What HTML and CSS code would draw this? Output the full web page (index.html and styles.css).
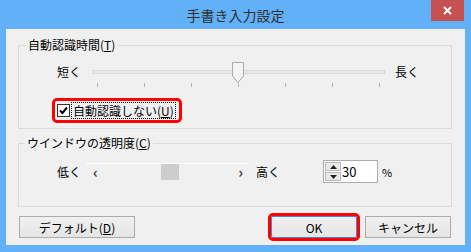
FILE: index.html
```html
<!DOCTYPE html>
<html lang="ja">
<head>
  <meta charset="UTF-8" />
  <title>手書き入力設定</title>
  <link rel="stylesheet" href="styles.css">
</head>
<body>
  <div class="window">
    <div class="titlebar">
      <div class="title">手書き入力設定</div>
      <div class="close">
        <svg width="9" height="9" viewBox="0 0 9 9"><path d="M1 1 L8 8 M8 1 L1 8" stroke="#fff" stroke-width="2"/></svg>
      </div>
    </div>

    <div class="client">
      <fieldset class="group group-time">
        <legend>自動認識時間(<u>T</u>)</legend>
        <div class="slider-row">
          <span class="side-label">短く</span>
          <div class="track">
            <svg class="thumb" width="12" height="21" viewBox="0 0 12 21">
              <path d="M0.5 0.5 H11.5 V14 L6 20.5 L0.5 14 Z" fill="#f4f4f4" stroke="#a9a9a9"/>
            </svg>
          </div>
          <span class="side-label right">長く</span>
        </div>
        <div class="ticks">
          <i></i><i></i><i></i><i></i><i></i><i></i><i></i>
        </div>
        <label class="check marked">
          <span class="box">
            <svg width="11" height="11" viewBox="0 0 11 11"><path d="M2 5.5 L4.5 8 L9 2.5" fill="none" stroke="#000" stroke-width="2"/></svg>
          </span>
          <span class="focus">自動認識しない(<u>U</u>)</span>
        </label>
      </fieldset>

      <fieldset class="group group-alpha">
        <legend>ウインドウの透明度(<u>C</u>)</legend>
        <div class="alpha-row">
          <span class="low-label">低く</span>
          <div class="scroll">
            <span class="arrow">&lsaquo;</span>
            <span class="scroll-thumb"></span>
            <span class="arrow">&rsaquo;</span>
          </div>
          <span class="high-label">高く</span>
          <div class="spin">
            <div class="spin-btns">
              <span class="spin-btn"><svg width="7" height="4" viewBox="0 0 7 4"><path d="M0 4 L3.5 0 L7 4 Z" fill="#222"/></svg></span>
              <span class="spin-btn"><svg width="7" height="4" viewBox="0 0 7 4"><path d="M0 0 L3.5 4 L7 0 Z" fill="#222"/></svg></span>
            </div>
            <span class="spin-value">30</span>
          </div>
          <span class="percent">%</span>
        </div>
      </fieldset>

      <div class="buttons">
        <button class="btn btn-default">デフォルト(<u>D</u>)</button>
        <button class="btn btn-ok marked">OK</button>
        <button class="btn btn-cancel">キャンセル</button>
      </div>
    </div>
  </div>
</body>
</html>
```

FILE: styles.css
```css
body {
  margin: 0;
  background: #62b0f7;
  font-family: "Noto Sans CJK JP", "Noto Sans", sans-serif;
  font-size: 12px;
  color: #000;
}
u {
  text-decoration: underline;
  text-underline-offset: 1px;
}
.window {
  width: 471px;
  height: 252px;
  display: flex;
  flex-direction: column;
}
.titlebar {
  height: 29px;
  display: flex;
  align-items: flex-start;
  padding-left: 40px;
}
.title {
  flex: 1;
  text-align: center;
  font-size: 14px;
  line-height: 30px;
  color: #2e2e2e;
}
.close {
  width: 33px;
  height: 21px;
  margin-right: 7px;
  background: #c75050;
  display: flex;
  align-items: center;
  justify-content: center;
}
.client {
  flex: 1;
  margin: 0 6px 7px 6px;
  background: #f0f0f0;
  padding: 9px 13px 7px 12px;
}
.group {
  margin: 0;
  padding: 0;
  width: 434px;
  box-sizing: border-box;
  border: 1px solid #dcdcdc;
  min-width: 0;
}
.group legend {
  padding: 0 2px;
  margin-left: 7px;
  line-height: 14px;
  height: 14px;
}
.group-alpha {
  margin-top: 7px;
}
.group-alpha legend {
  margin-left: 6px;
}

/* time slider */
.slider-row {
  display: flex;
  align-items: center;
  height: 20px;
  margin-top: 10px;
  padding-left: 38px;
}
.side-label {
  width: 35px;
  line-height: 14px;
}
.side-label.right {
  width: auto;
  margin-left: 10px;
}
.track {
  position: relative;
  width: 293px;
  height: 4px;
  box-sizing: border-box;
  border: 1px solid #d9d9d9;
  background: #e7e7e7;
}
.thumb {
  position: absolute;
  left: 139px;
  top: -9px;
}
.ticks {
  display: flex;
  justify-content: space-between;
  width: 283px;
  height: 4px;
  margin: 1px 0 0 78px;
}
.ticks i {
  width: 1px;
  height: 4px;
  background: #b5b5b5;
}
.check {
  display: flex;
  align-items: center;
  width: 124px;
  height: 19px;
  margin: 14px 0 8px 36px;
  padding-left: 2px;
  box-sizing: border-box;
}
.marked {
  outline: 3px solid #ff0000;
  border-radius: 2px;
}
.box {
  width: 13px;
  height: 13px;
  box-sizing: border-box;
  border: 1px solid #333;
  background: #fff;
  display: flex;
  align-items: center;
  justify-content: center;
}
.focus {
  margin-left: 1px;
  padding: 0 1px;
  border: 1px dotted #000;
  line-height: 15px;
}

/* transparency */
.alpha-row {
  display: flex;
  align-items: center;
  height: 23px;
  margin: 10px 0 23px 0;
  padding-left: 38px;
}
.low-label {
  width: 29px;
}
.scroll {
  width: 163px;
  height: 17px;
  box-sizing: border-box;
  border-top: 1px solid #fff;
  display: flex;
  align-items: center;
  padding: 0 6px 0 7px;
}
.arrow {
  font-size: 15px;
  font-weight: bold;
  color: #444;
  line-height: 14px;
}
.scroll-thumb {
  width: 18px;
  height: 16px;
  background: #cdcdcd;
  margin: 0 auto 0 63px;
}
.high-label {
  width: 67px;
  margin-left: 7px;
}
.spin {
  width: 55px;
  height: 23px;
  box-sizing: border-box;
  border: 1px solid #acacac;
  background: #fff;
  display: flex;
  align-items: center;
  padding-left: 1px;
}
.spin-btns {
  display: flex;
  flex-direction: column;
  gap: 1px;
}
.spin-btn {
  width: 16px;
  height: 9px;
  box-sizing: border-box;
  border: 1px solid #b9b9b9;
  background: #e9e9e9;
  display: flex;
  align-items: center;
  justify-content: center;
}
.spin-value {
  margin-left: 1px;
  font-size: 13px;
}
.percent {
  margin-left: 4px;
  font-size: 11px;
}

/* buttons */
.buttons {
  display: flex;
  margin-top: 9px;
  padding: 0 1px 0 1px;
}
.btn {
  height: 22px;
  width: 86px;
  box-sizing: border-box;
  border: 1px solid #acacac;
  background: linear-gradient(to bottom, #f0f0f0, #e5e5e5);
  font-family: inherit;
  font-size: 12px;
  color: #000;
  padding: 0;
}
.btn-default {
  width: 116px;
}
.btn-ok {
  margin-left: auto;
  border-color: #3c8ad8;
}
.btn-cancel {
  margin-left: 8px;
}
```
